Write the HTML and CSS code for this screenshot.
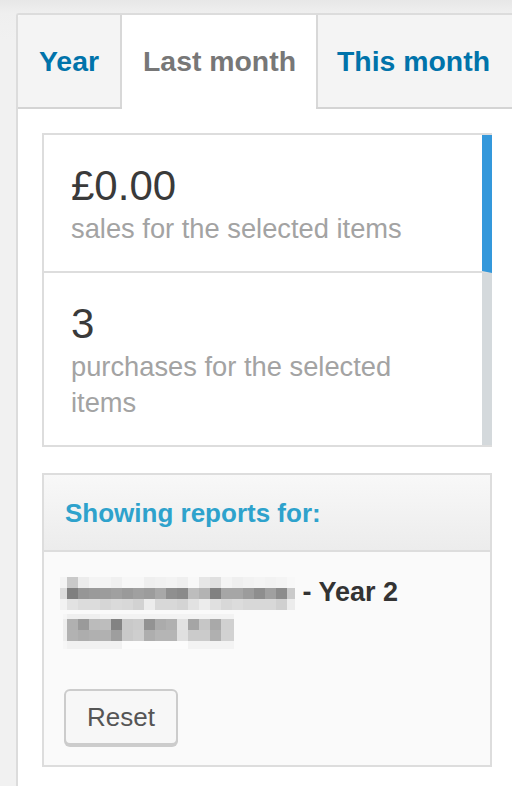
FILE: index.html
```html
<!DOCTYPE html>
<html lang="en">
<head>
<meta charset="utf-8">
<title>Reports</title>
<link rel="stylesheet" href="styles.css">
</head>
<body>
<div class="panel">
  <nav class="tabs">
    <a class="tab">Year</a>
    <a class="tab active">Last month</a>
    <a class="tab last">This month</a>
    <span class="tab-fill"></span>
  </nav>
  <div class="panel-body">
    <ul class="legend">
      <li class="legend-item sales">
        <strong class="amount">£0.00</strong>
        <span class="caption">sales for the selected items</span>
      </li>
      <li class="legend-item purchases">
        <strong class="amount">3</strong>
        <span class="caption">purchases for the selected items</span>
      </li>
    </ul>
    <section class="report-box">
      <h3 class="report-title">Showing reports for:</h3>
      <div class="report-inside">
        <p class="report-line"><span class="mosaic m1" aria-hidden="true"><span class="strip a"></span><span class="strip b"></span><span class="strip c"></span></span> <b>- Year 2</b><br><span class="mosaic m2" aria-hidden="true"><span class="strip a"></span><span class="strip b"></span><span class="strip c"></span><span class="strip d"></span></span></p>
        <button class="button" type="button">Reset</button>
      </div>
    </section>
  </div>
</div>
</body>
</html>
```

FILE: styles.css
```css
html, body {
  margin: 0;
  padding: 0;
}
body {
  width: 512px;
  height: 786px;
  overflow: hidden;
  background: linear-gradient(#e7e7e7 0, #efefef 13px, #f1f1f1 40px) no-repeat, #f1f1f1;
  font-family: "Liberation Sans", Arial, sans-serif;
  color: #333;
}
.panel {
  margin: 13px 0 0 16px;
  width: 500px;
  height: 800px;
  background: #fff;
  border: 2px solid #dcdcdc;
  border-right: 0;
  border-bottom: 0;
  border-radius: 3px 0 0 0;
}
.tabs {
  display: flex;
  height: 92px;
  background: #f4f4f4;
  border-bottom: 2px solid #d4d4d4;
  border-radius: 3px 0 0 0;
}
.tab {
  display: block;
  padding: 0 21px;
  font-size: 28.4px;
  font-weight: bold;
  line-height: 92px;
  color: #0073aa;
  white-space: nowrap;
  cursor: pointer;
}
.tab:first-child {
  border-right: 2px solid #d8d8d8;
  padding: 0 21px 0 21px;
}
.tab.active {
  background: #fff;
  color: #777;
  padding: 0 20px 0 21px;
  height: 94px;
  margin-bottom: -2px;
}
.tab.last {
  border-left: 2px solid #d8d8d8;
  padding-left: 19px;
}
.tab-fill {
  flex: 1;
}
.panel-body {
  padding: 24px 26px 0 24px;
}
.legend {
  list-style: none;
  margin: 0;
  padding: 0;
  border: 2px solid #dddddd;
  border-right: 0;
}
.legend-item {
  display: block;
  padding: 26px 28px 24px 27px;
  border-right: 10px solid #d4d9dc;
}
.legend-item.sales {
  border-right-color: #3498db;
  border-bottom: 2px solid #dddddd;
}
.amount {
  display: block;
  font-size: 42px;
  line-height: 50px;
  font-weight: normal;
  color: #3a3a3a;
}
.caption {
  display: block;
  font-size: 27.3px;
  line-height: 36px;
  color: #a3a3a3;
}
.report-box {
  margin-top: 26px;
  border: 2px solid #dddddd;
  background: #fafafa;
}
.report-title {
  margin: 0;
  padding: 20px 21px 19px;
  font-size: 26px;
  line-height: 36px;
  font-weight: bold;
  color: #2ea2cc;
  background: linear-gradient(#f8f8f8, #ececec);
  border-bottom: 2px solid #dddddd;
}
.report-inside {
  padding: 21px 20px 20px;
}
.report-line {
  margin: 0 0 40px;
  font-size: 27px;
  line-height: 38px;
  color: #333;
}
.report-line b {
  font-weight: bold;
  color: #333;
}
.mosaic {
  display: inline-flex;
  flex-direction: column;
  vertical-align: middle;
}
.mosaic .strip {
  display: block;
}
.m1 {
  width: 235px;
  margin-left: -4px;
}
.m1 .strip { height: 11px; }
.m1 .a {
  background: linear-gradient(to right,
    #f4f4f4 0 7px, #c9c9c9 7px 18px, #ececec 18px 29px, #f4f4f4 29px 51px,
    #f0f0f0 51px 62px, #f7f7f7 62px 84px, #efefef 84px 95px, #f1f1f1 95px 106px,
    #f3f3f3 106px 117px, #efefef 117px 128px, #f8f8f8 128px 139px, #e6e6e6 139px 150px,
    #e0e0e0 150px 161px, #f4f4f4 161px 172px, #efefef 172px 183px, #f2f2f2 183px 194px,
    #f4f4f4 194px 205px, #f2f2f2 205px 216px, #f4f4f4 216px 227px, #f8f8f8 227px 235px);
}
.m1 .b {
  background: linear-gradient(to right,
    #dcdcdc 0 7px, #7f7f7f 7px 18px, #969696 18px 29px, #9a9a9a 29px 40px,
    #9c9c9c 40px 51px, #a0a0a0 51px 62px, #9a9a9a 62px 73px, #a0a0a0 73px 84px,
    #9c9c9c 84px 95px, #a8a8a8 95px 106px, #8f8f8f 106px 117px, #8a8a8a 117px 128px,
    #bdbdbd 128px 139px, #b3b3b3 139px 150px, #818181 150px 161px, #a6a6a6 161px 183px,
    #9c9c9c 183px 194px, #8e8e8e 194px 205px, #a0a0a0 205px 216px, #8c8c8c 216px 227px,
    #cacaca 227px 235px);
}
.m1 .c {
  background: linear-gradient(to right,
    #f2f2f2 0 7px, #e2e2e2 7px 18px, #dcdcdc 18px 40px, #d6d6d6 40px 51px,
    #dadada 51px 62px, #d8d8d8 62px 73px, #d2d2d2 73px 84px, #ececec 84px 95px,
    #d8d8d8 95px 117px, #d4d4d4 117px 128px, #e2e2e2 128px 139px, #ececec 139px 150px,
    #e0e0e0 150px 161px, #d8d8d8 161px 172px, #dcdcdc 172px 183px, #d8d8d8 183px 216px,
    #d0d0d0 216px 227px, #ececec 227px 235px);
}
.m2 {
  width: 171px;
  margin-left: -1px;
}
.m2 .a { height: 5px; background: linear-gradient(to right, #f6f6f6 0 4px, #efefef 4px 37px, #f3f3f3 37px 171px); }
.m2 .b {
  height: 11px;
  background: linear-gradient(to right,
    #eeeeee 0 4px, #b0b0b0 4px 15px, #9a9a9a 15px 26px, #bbbbbb 26px 37px,
    #bdbdbd 37px 48px, #838383 48px 59px, #c9c9c9 59px 70px, #cccccc 70px 81px,
    #939393 81px 92px, #ababab 92px 103px, #b0b0b0 103px 114px, #e2e2e2 114px 125px,
    #a5a5a5 125px 136px, #c6c6c6 136px 147px, #a9a9a9 147px 158px, #d0d0d0 158px 171px);
}
.m2 .c {
  height: 11px;
  background: linear-gradient(to right,
    #eeeeee 0 4px, #b2b2b2 4px 15px, #adadad 15px 26px, #b0b0b0 26px 37px,
    #b1b1b1 37px 48px, #9e9e9e 48px 59px, #c9c9c9 59px 70px, #cecece 70px 81px,
    #aeaeae 81px 92px, #b5b5b5 92px 114px, #e0e0e0 114px 125px, #cbcbcb 125px 147px,
    #b0b0b0 147px 158px, #d2d2d2 158px 171px);
}
.m2 .d { height: 8px; background: linear-gradient(to right, #f6f6f6 0 4px, #f1f1f1 4px 59px, #fcfcfc 59px 125px, #f3f3f3 125px 171px); }
.button {
  display: block;
  height: 56px;
  padding: 0 21px;
  font-family: "Liberation Sans", Arial, sans-serif;
  font-size: 26px;
  color: #555;
  background: #f7f7f7;
  border: 2px solid #cccccc;
  border-radius: 6px;
  box-shadow: 0 2px 0 #cccccc;
  cursor: pointer;
}
```
